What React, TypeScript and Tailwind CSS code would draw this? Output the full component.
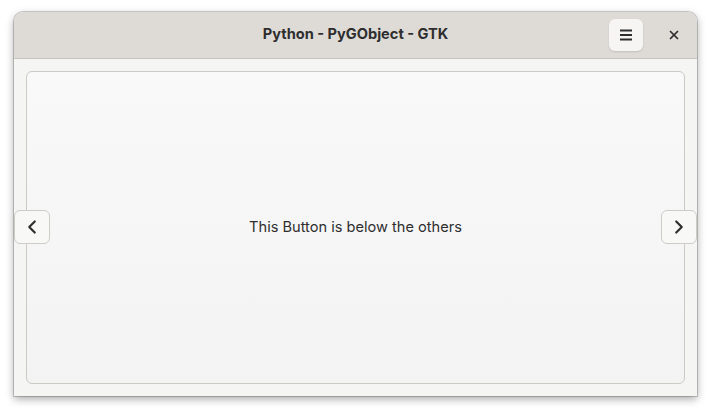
import { ChevronLeft, ChevronRight, X } from 'lucide-react'

export default function App() {
  return (
    <div className="w-[711px] h-[413px] bg-white relative overflow-hidden" style={{ fontFamily: 'Inter, "Noto Sans", sans-serif' }}>
      <div className="ml-[14px] mt-[12px] w-[683px] h-[384px] flex flex-col rounded-t-[9px] bg-[#f5f5f4] shadow-[0_3px_9px_rgba(0,0,0,0.35),0_0_0_1px_rgba(0,0,0,0.18)]">
        <header className="h-[47px] shrink-0 flex items-center rounded-t-[9px] bg-[#dedbd7] border-b border-[#c8c5c1] relative">
          <div className="flex-1 text-center text-[14.6px] font-bold text-[#2e2e2e]">Python - PyGObject - GTK</div>
          <div className="absolute right-[11px] top-[7px] flex items-center gap-[19px]">
            <button className="w-[34px] h-[32px] rounded-[6px] bg-[#f6f5f4] shadow-[0_1px_2px_rgba(0,0,0,0.12)] flex items-center justify-center text-[#2e2e2e]">
              <svg width="16" height="16" viewBox="0 0 16 16">
                <path d="M2 3.5h12M2 8h12M2 12.5h12" stroke="currentColor" strokeWidth="2" fill="none" />
              </svg>
            </button>
            <button className="w-[24px] h-[24px] flex items-center justify-center text-[#2e2e2e]">
              <X size={14} strokeWidth={3} />
            </button>
          </div>
        </header>
        <div className="flex-1 p-[12px]">
          <div className="h-full rounded-[6px] border border-[#cdc9c5] bg-gradient-to-b from-[#f9f9f9] to-[#f3f3f3] flex items-center justify-center text-[14.6px] text-[#2e2e2e]">
            This Button is below the others
          </div>
        </div>
      </div>
      <button className="absolute left-[14px] top-[210px] w-[36px] h-[34px] rounded-[6px] border border-[#cfcbc7] bg-[#f8f8f7] flex items-center justify-center text-[#2e2e2e]">
        <ChevronLeft size={22} strokeWidth={2.4} />
      </button>
      <button className="absolute left-[661px] top-[210px] w-[36px] h-[34px] rounded-[6px] border border-[#cfcbc7] bg-[#f8f8f7] flex items-center justify-center text-[#2e2e2e]">
        <ChevronRight size={22} strokeWidth={2.4} />
      </button>
    </div>
  )
}
